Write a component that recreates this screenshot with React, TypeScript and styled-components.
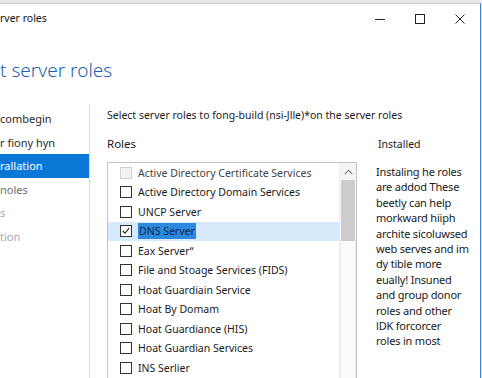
import React from "react";
import styled, { createGlobalStyle } from "styled-components";

const Global = createGlobalStyle`
  html, body {
    margin: 0;
    padding: 0;
    background: #e6e6e6;
    overflow: hidden;
  }
  body {
    font-family: "Noto Sans", "Open Sans", "Liberation Sans", sans-serif;
    color: #1a1a1a;
  }
`;

const Window = styled.div`
  margin-top: 3px;
  width: 480px;
  height: 375px;
  background: #fff;
  border-top: 1px solid #c9c9c9;
  border-right: 1px solid #3c82d0;
  display: flex;
  flex-direction: column;
  overflow: hidden;
`;

const TitleBar = styled.div`
  height: 30px;
  display: flex;
  align-items: center;
  justify-content: space-between;
`;

const Title = styled.div`
  font-size: 10.5px;
  color: #111;
  padding-bottom: 2px;
`;

const Controls = styled.div`
  display: flex;
  align-items: center;
  height: 100%;
`;

const ControlButton = styled.div`
  width: 40px;
  height: 100%;
  display: flex;
  align-items: center;
  justify-content: center;
  color: #222;
`;

const Heading = styled.h1`
  margin: 21px 0 0;
  font-size: 19px;
  font-weight: 300;
  color: #1d62b0;
  line-height: 30px;
`;

const Body = styled.div`
  flex: 1;
  display: flex;
  margin-top: 19px;
  min-height: 0;
`;

const Nav = styled.div`
  width: 89px;
  border-right: 1px solid #d9d9d9;
  padding-top: 3px;
  display: flex;
  flex-direction: column;
`;

const NavItem = styled.div<{ $active?: boolean; $tone?: number }>`
  height: 23.5px;
  line-height: 23.5px;
  font-size: 11px;
  white-space: nowrap;
  background: ${(p) => (p.$active ? "#0a78d7" : "transparent")};
  color: ${(p) =>
    p.$active ? "#fff" : p.$tone === 2 ? "#a8a8a8" : p.$tone === 1 ? "#6e6e6e" : "#2a2a2a"};
`;

const Main = styled.div`
  flex: 1;
  padding-left: 17px;
  display: grid;
  grid-template-columns: 250px 1fr;
  grid-template-rows: auto auto 1fr;
  column-gap: 19px;
  min-height: 0;
`;

const Intro = styled.div`
  grid-column: 1 / span 2;
  font-size: 10.5px;
  white-space: nowrap;
  color: #1a1a1a;
  line-height: 18px;
  margin-top: 2px;
`;

const ColumnTitle = styled.div<{ $small?: boolean }>`
  font-size: ${(p) => (p.$small ? "10.5px" : "11.5px")};
  margin-top: 11px;
  line-height: 18px;
  color: #1a1a1a;
  padding-left: ${(p) => (p.$small ? "2px" : "0")};
`;

const ListBox = styled.div`
  margin-top: 9px;
  border: 1px solid #c4c4c4;
  border-bottom: none;
  display: flex;
  min-height: 0;
  overflow: hidden;
`;

const Rows = styled.div`
  flex: 1;
  display: flex;
  flex-direction: column;
`;

const Row = styled.div<{ $selected?: boolean }>`
  height: 19.5px;
  flex: none;
  display: flex;
  align-items: center;
  padding-left: 12px;
  gap: 6px;
  font-size: 10.5px;
  white-space: nowrap;
  background: ${(p) => (p.$selected ? "#d6eafb" : "transparent")};
`;

const Check = styled.div<{ $disabled?: boolean }>`
  width: 10px;
  height: 10px;
  border: 1px solid ${(p) => (p.$disabled ? "#d2d2d2" : "#333")};
  background: ${(p) => (p.$disabled ? "#f2f2f2" : "#fff")};
  display: flex;
  align-items: center;
  justify-content: center;
  flex: none;
`;

const Label = styled.span<{ $muted?: boolean; $highlight?: boolean }>`
  color: ${(p) => (p.$highlight ? "#0b2a4e" : p.$muted ? "#444" : "#1a1a1a")};
  background: ${(p) => (p.$highlight ? "#2d89de" : "transparent")};
  padding: ${(p) => (p.$highlight ? "1px 1px" : "0")};
`;

const ScrollBar = styled.div`
  width: 16px;
  flex: none;
  background: #f4f4f4;
  border-left: 1px solid #f0f0f0;
  display: flex;
  flex-direction: column;
  align-items: center;
`;

const Arrow = styled.div`
  height: 17px;
  display: flex;
  align-items: center;
  justify-content: center;
  color: #8a8a8a;
`;

const Thumb = styled.div`
  width: 14px;
  height: 61px;
  background: #cdcdcd;
`;

const Track = styled.div`
  flex: 1;
  width: 14px;
  background: #fbfbfb;
  border-left: 1px solid #ececec;
  border-right: 1px solid #ececec;
`;

const Description = styled.div`
  margin-top: 11px;
  font-size: 11px;
  line-height: 15.4px;
  white-space: pre-line;
  letter-spacing: -0.2px;
  color: #1a1a1a;
`;

const roles = [
  { name: "Active Directory Certificate Services", disabled: true },
  { name: "Active Directory Domain Services" },
  { name: "UNCP Server" },
  { name: "DNS Server", checked: true },
  { name: "Eax Server\u02ba" },
  { name: "File and Stoage Services (FIDS)" },
  { name: "Hoat Guardiain Service" },
  { name: "Hoat By Domam" },
  { name: "Hoat Guardiance (HIS)" },
  { name: "Hoat Guardian Services" },
  { name: "INS Serlier" },
];

const navItems = [
  { label: "combegin" },
  { label: "r fiony hyn" },
  { label: "rallation", active: true },
  { label: "noles", tone: 1 },
  { label: "s", tone: 2 },
  { label: "tion", tone: 2 },
];

const description = `Instaling  he roles
are addod These
beetly can help
morkward hiiph
archite sicoluwsed
web serves and im
dy tible more
eually! Insuned
and group donor
roles and other
lDK forcorcer
roles in most`;

const App = () => {
  return (
    <>
      <Global />
      <Window>
        <TitleBar>
          <Title>rver roles</Title>
          <Controls>
            <ControlButton>
              <svg width="10" height="10" viewBox="0 0 10 10">
                <line x1="0" y1="5.5" x2="10" y2="5.5" stroke="#222" strokeWidth="1" />
              </svg>
            </ControlButton>
            <ControlButton>
              <svg width="10" height="10" viewBox="0 0 10 10">
                <rect x="0.5" y="0.5" width="9" height="9" fill="none" stroke="#222" strokeWidth="1" />
              </svg>
            </ControlButton>
            <ControlButton>
              <svg width="10" height="10" viewBox="0 0 10 10">
                <path d="M0.5 0.5 L9.5 9.5 M9.5 0.5 L0.5 9.5" stroke="#222" strokeWidth="1" />
              </svg>
            </ControlButton>
          </Controls>
        </TitleBar>
        <Heading>t server roles</Heading>
        <Body>
          <Nav>
            {navItems.map((n) => (
              <NavItem key={n.label} $active={n.active} $tone={n.tone}>
                {n.label}
              </NavItem>
            ))}
          </Nav>
          <Main>
            <Intro>Select server roles to fong-build (nsi-Jlle)*on the server roles</Intro>
            <ColumnTitle>Roles</ColumnTitle>
            <ColumnTitle $small>Installed</ColumnTitle>
            <ListBox>
              <Rows>
                {roles.map((r) => (
                  <Row key={r.name} $selected={r.checked}>
                    <Check $disabled={r.disabled}>
                      {r.checked && (
                        <svg width="8" height="8" viewBox="0 0 8 8">
                          <path d="M0.8 4 L3 6.2 L7.2 1.2" fill="none" stroke="#222" strokeWidth="1.1" />
                        </svg>
                      )}
                    </Check>
                    <Label $muted={r.disabled} $highlight={r.checked}>
                      {r.name}
                    </Label>
                  </Row>
                ))}
              </Rows>
              <ScrollBar>
                <Arrow>
                  <svg width="9" height="6" viewBox="0 0 9 6">
                    <path d="M0.8 5 L4.5 1.3 L8.2 5" fill="none" stroke="#8a8a8a" strokeWidth="1.1" />
                  </svg>
                </Arrow>
                <Thumb />
                <Track />
              </ScrollBar>
            </ListBox>
            <Description>{description}</Description>
          </Main>
        </Body>
      </Window>
    </>
  );
};

export default App;
